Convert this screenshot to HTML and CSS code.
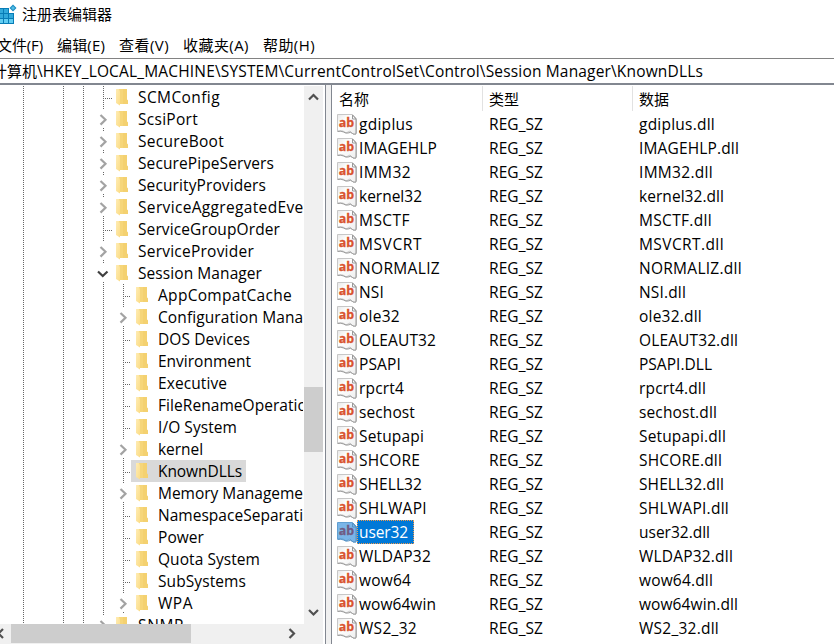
FILE: index.html
```html
<!DOCTYPE html>
<html lang="zh-CN">
<head>
<meta charset="utf-8">
<title>注册表编辑器</title>
<link rel="stylesheet" href="styles.css">
</head>
<body>
<svg class="defs" aria-hidden="true">
  <defs>
    <linearGradient id="gold" x1="0" x2="1" y2="1"><stop stop-color="#ffecb4"/><stop offset="1" stop-color="#fbdc86"/></linearGradient>
    <linearGradient id="paper" x2="1" y2="1"><stop stop-color="#e8e8e8"/><stop offset=".35" stop-color="#fff"/><stop offset="1" stop-color="#eee"/></linearGradient>
    <symbol id="folder" viewBox="0 0 13 18">
      <path d="M3 1H11V11.5L12 12.5V16H3Z" fill="#f6d67a"/><path d="M7 1H11V11.5L12 12.5V16H7Z" fill="#f3ce68" opacity=".55"/>
      <path d="M0 1H3L4 3.5V17.5L0 15Z" fill="url(#gold)"/>
    </symbol>
  </defs>
</svg>
<main class="window">
  <header class="title">
    <svg class="logo" width="17" height="22" viewBox="0 0 17 22">
      <path d="M0 5H9V10H14V21H0Z" fill="#087cb6"/>
      <path d="M0 6H3V10H0ZM4 6H8V10H4ZM0 11H3V15H0ZM4 11H8V15H4ZM9 11H13V15H9Z" fill="#31a9db"/>
      <path d="M0 16H3V20H0ZM4 16H8V20H4ZM9 16H13V20H9Z" fill="#62cdf2"/>
      <path d="M13 1.5L16.5 5L13 8.5L9.5 5Z" fill="#168bc2"/><path d="M13 3L15 5L13 7L11 5Z" fill="#55bce3"/>
    </svg>
    <span>注册表编辑器</span>
  </header>
  <nav class="menu"><span data-w="46">文件(F)</span><span data-w="48">编辑(E)</span><span data-w="50">查看(V)</span><span data-w="66">收藏夹(A)</span><span data-w="52">帮助(H)</span></nav>
  <div class="address"><span class="root">计算机</span><span data-w="666">\HKEY_LOCAL_MACHINE\SYSTEM\CurrentControlSet\Control\Session Manager\KnownDLLs</span></div>
  <div class="panes">
    <section class="tree-pane">
      <div class="tree-body">
        <div class="tree" id="tree"></div>
        <div class="vscroll">
          <svg width="19" height="20"><path d="M5 13.5L9.5 9L14 13.5" class="arrow"/></svg>
          <div class="vthumb"></div>
          <svg class="down" width="19" height="20"><path d="M5 7L9.5 11.5L14 7" class="arrow"/></svg>
        </div>
      </div>
      <div class="hscroll">
        <svg width="11" height="20"><path d="M3 5L-1.5 9.5L3 14" class="arrow"/></svg>
        <div class="hthumb"></div>
        <svg class="right" width="19" height="20"><path d="M6.5 5L11 9.5L6.5 14" class="arrow"/></svg>
      </div>
    </section>
    <section class="list-pane">
      <div class="columns"><span>名称</span><span>类型</span><span>数据</span></div>
      <div id="list"></div>
    </section>
  </div>
</main>
<script src="app.js"></script>
</body>
</html>
```
FILE: styles.css
```css
* { box-sizing: border-box; }
body { margin: 0; background: #fff; color: #000; font: 15px/22px "Open Sans", "Noto Sans CJK SC", sans-serif; overflow: hidden; }
.defs { position: absolute; width: 0; height: 0; }
.window { width: 834px; height: 644px; display: flex; flex-direction: column; overflow: hidden; }
span { white-space: pre; }
.title { height: 33px; display: flex; padding-top: 3px; gap: 5px; }
.title span { line-height: 23px; }
.logo { flex: none; }
.menu { height: 25px; display: flex; line-height: 24px; margin-left: -3px; gap: 14px; }
.menu span { flex: none; }
.address { height: 25px; display: flex; border-top: 1px solid #828282; line-height: 25px; font-size: 15.5px; }
.address .root { margin-left: -8px; width: 45px; flex: none; font-size: 15px; }
.panes { height: 561px; display: flex; border-top: 2px solid #828790; background: #f0f0f0; }
.tree-pane { width: 326px; border-right: 1px solid #828790; background: #fff; display: flex; flex-direction: column; }
.tree-body { height: 539px; padding-top: 1px; display: flex; }
.tree {
  width: 303px; height: 538px; margin-right: 1px; overflow: hidden; flex: none; font-size: 15.5px;
  background:
    repeating-linear-gradient(#666 0 1px, transparent 1px 2px) 23px 0 / 1px 100% no-repeat,
    repeating-linear-gradient(#666 0 1px, transparent 1px 2px) 63px 0 / 1px 100% no-repeat,
    repeating-linear-gradient(#666 0 1px, transparent 1px 2px) 83px 0 / 1px 100% no-repeat;
}
.node { height: 22px; display: flex; padding-left: 94px; white-space: nowrap; }
.node.child { padding-left: 114px; background: repeating-linear-gradient(#666 0 1px, transparent 1px 2px) 103px 0 / 1px 100% no-repeat; }
.branch { width: 22px; height: 22px; flex: none; }
.child .branch { width: 17px; }
.label { display: flex; height: 22px; }
.child .label { padding-left: 5px; padding-right: 4px; }
.selected .label { background: #d9d9d9; }
.folder { width: 13px; height: 18px; flex: none; margin: 2px 9px 0 0; }
.dots { stroke: #666; stroke-dasharray: 1 1; fill: none; }
.chevron { stroke: #a3a3a3; stroke-width: 2.2; fill: none; }
.chevron.open { stroke: #404040; }
.vscroll { width: 19px; background: #f0f0f0; display: flex; flex-direction: column; height: 538px; }
.vscroll svg { flex: none; }
.vthumb { height: 65px; background: #cdcdcd; margin-top: 281px; }
.down { margin-top: auto; margin-bottom: 1px; }
.arrow { fill: none; stroke: #505050; stroke-width: 2.2; }
.hscroll { height: 20px; width: 323px; background: #f0f0f0; display: flex; }
.hthumb { width: 180px; height: 19px; background: #cdcdcd; }
.right { margin-left: 92px; }
.list-pane { flex: 1; margin-left: 5px; border-left: 1px solid #828790; background: #fff; font-size: 15.5px; }
.columns { height: 27px; padding-top: 1px; display: grid; grid-template-columns: 151px 150px 1fr; font-size: 15px; }
.columns span { height: 25px; line-height: 26px; padding-left: 6px; }
.columns span:first-child { padding-left: 7px; }
.columns span:not(:last-child) { border-right: 1px solid #e2e2e2; }
.row { height: 24px; display: grid; grid-template-columns: 157px 150px 1fr; line-height: 24px; }
.name { display: flex; }
.name svg { flex: none; margin: 2px 0 0 5px; }
.name span { display: block; height: 24px; padding-left: 2px; }
.name b { font-weight: 400; height: 24px; }
.row.active .name b { background: #0078d7; color: #fff; outline: 1px dotted #f29b4b; outline-offset: -1px; padding-right: 6px; }
.ab { font: bold 13px "Open Sans", sans-serif; fill: #d9532f; stroke: #d9532f; stroke-width: .3; }
.active .ab { fill: #705b83; stroke: #705b83; }
```
FILE: app.js
```js
// Each tree entry: name, width of the label, marker (leaf, closed or open), depth.
const nodes = [
  ['SCMConfig', 82, '-', 0], ['ScsiPort', 60, '>', 0], ['SecureBoot', 86, '>', 0],
  ['SecurePipeServers', 136, '>', 0], ['SecurityProviders', 128, '>', 0],
  ['ServiceAggregatedEvents', 189, '>', 0], ['ServiceGroupOrder', 142, '-', 0],
  ['ServiceProvider', 116, '>', 0], ['Session Manager', 124, 'v', 0],
  ['AppCompatCache', 134, '-', 1], ['Configuration Manager', 169, '>', 1],
  ['DOS Devices', 92, '-', 1], ['Environment', 93, '-', 1], ['Executive', 69, '-', 1],
  ['FileRenameOperations', 166, '-', 1], ['I/O System', 79, '-', 1], ['kernel', 45, '>', 1],
  ['KnownDLLs', 84, '-', 1], ['Memory Management', 160, '>', 1],
  ['NamespaceSeparation', 164, '-', 1], ['Power', 46, '-', 1], ['Quota System', 102, '-', 1],
  ['SubSystems', 88, '-', 1], ['WPA', 35, '>', 1], ['SNMP', 46, '>', 0]
];
const values = [
  ['gdiplus', 54, 76], ['IMAGEHLP', 78, 100], ['IMM32', 52, 74], ['kernel32', 63, 85],
  ['MSCTF', 51, 73], ['MSVCRT', 63, 85], ['NORMALIZ', 81, 103], ['NSI', 25, 47],
  ['ole32', 41, 63], ['OLEAUT32', 77, 99], ['PSAPI', 42, 73, 'PSAPI.DLL'], ['rpcrt4', 45, 67],
  ['sechost', 56, 78], ['Setupapi', 65, 87], ['SHCORE', 61, 83], ['SHELL32', 63, 85],
  ['SHLWAPI', 68, 90], ['user32', 49, 71], ['WLDAP32', 72, 94], ['wow64', 52, 74],
  ['wow64win', 77, 99], ['WS2_32', 58, 80]
];
const span = (text, width) => `<span data-w="${width}">${text}</span>`;

function marker(kind, child) {
  const x = 9.5;
  if (kind === '>') return `<path class="dots" d="M${x} 0V2M${x} 20V22"/><path class="chevron" d="M6.5 7L11.5 11.8L6.5 16.6"/>`;
  if (kind === 'v') return `<path class="dots" d="M${x} 0V2M${x} 20V22"/><path class="chevron open" d="M4 9.5L8.75 14L13.5 9.5"/>`;
  return `<path class="dots" d="M${x} 0V22M11 12.5H${child ? 17 : 19}"/>`;
}

document.getElementById('tree').innerHTML = nodes.map(([name, width, kind, depth]) => `
  <div class="node ${depth ? 'child' : ''} ${name === 'KnownDLLs' ? 'selected' : ''}">
    <svg class="branch">${marker(kind, depth)}</svg>
    <div class="label"><svg class="folder"><use href="#folder"/></svg>${span(name, width)}</div>
  </div>`).join('');

document.getElementById('list').innerHTML = values.map(([name, w, dw, data]) => {
  const on = name === 'user32';
  return `<div class="row ${on ? 'active' : ''}">
    <div class="name"><svg width="20" height="21" viewBox="0 0 20 21">
      <path d="M.5 .5H15.5L19.5 4.5V19L16 20L13 17L9 19L6 17L.5 17Z" fill="${on ? '#7ab5e8' : 'url(#paper)'}" stroke="${on ? '#609fd2' : '#c7c7c7'}"/>
      <path d="M.5 17.5Q4 16.5 6.5 18T11 19Q13.5 17.5 15.5 19.5T19 20V5L15.5 1V5H19" fill="none" stroke="${on ? '#5792c4' : '#999'}"/>
      <text class="ab" x="1.8" y="13.2" textLength="15.4" lengthAdjust="spacingAndGlyphs">ab</text></svg><b>${span(name, w)}</b></div>
    ${span('REG_SZ', 54)}${span(data || name + '.dll', dw)}
  </div>`;
}).join('');

document.querySelectorAll('[data-w]').forEach(el => {
  const range = document.createRange();
  range.selectNodeContents(el);
  const natural = range.getBoundingClientRect().width;
  el.style.letterSpacing = (el.dataset.w - natural) / el.textContent.length + 'px';
});
```
